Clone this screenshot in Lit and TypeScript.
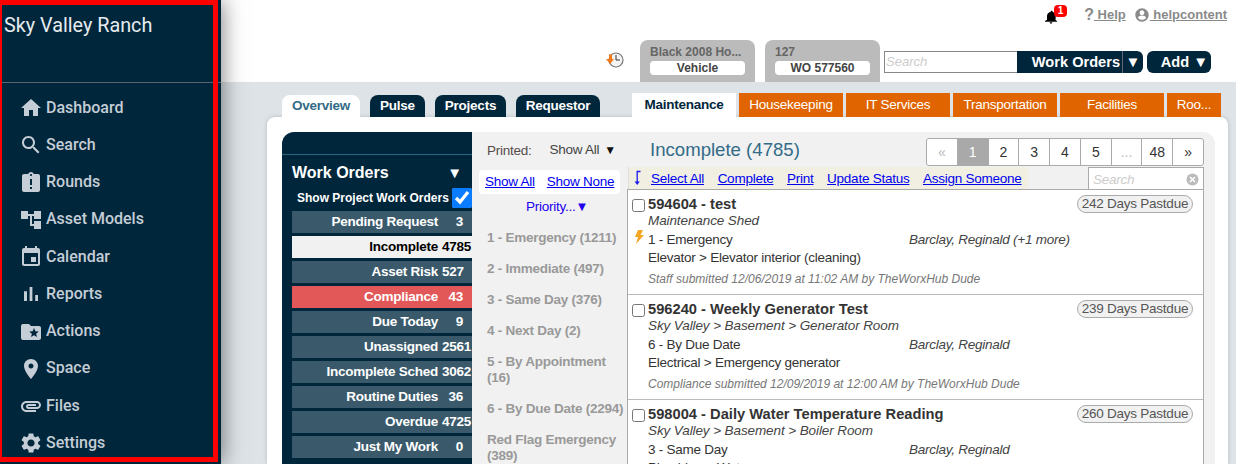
import { LitElement, html, css, svg } from "lit";
import { customElement } from "lit/decorators.js";

const NAV: [string, string][] = [
  ["Dashboard", "M10 20v-6h4v6h5v-8h3L12 3 2 12h3v8z"],
  ["Search", "M15.5 14h-.79l-.28-.27C15.41 12.59 16 11.11 16 9.5 16 5.91 13.09 3 9.5 3S3 5.91 3 9.5 5.91 16 9.5 16c1.61 0 3.09-.59 4.23-1.57l.27.28v.79l5 4.99L20.49 19l-4.99-5zm-6 0C7.01 14 5 11.99 5 9.5S7.01 5 9.5 5 14 7.01 14 9.5 11.99 14 9.5 14z"],
  ["Rounds", "M19 3h-4.18C14.4 1.84 13.3 1 12 1c-1.3 0-2.4.84-2.82 2H5c-1.1 0-2 .9-2 2v14c0 1.1.9 2 2 2h14c1.1 0 2-.9 2-2V5c0-1.1-.9-2-2-2zm-6 15h-2v-2h2v2zm0-4h-2V8h2v6zm-1-9c-.55 0-1-.45-1-1s.45-1 1-1 1 .45 1 1-.45 1-1 1z"],
  ["Asset Models", "M22 11V3h-7v3H9V3H2v8h7V8h2v10h4v3h7v-8h-7v3h-2V8h2v3z"],
  ["Calendar", "M17 12h-5v5h5v-5zM16 1v2H8V1H6v2H5c-1.11 0-1.99.9-1.99 2L3 19c0 1.1.89 2 2 2h14c1.1 0 2-.9 2-2V5c0-1.1-.9-2-2-2h-1V1h-2zm3 18H5V8h14v11z"],
  ["Reports", "M5 9.2h3V19H5zM10.6 5h2.8v14h-2.8zm5.6 8H19v6h-2.8z"],
  ["Actions", "M20 6h-8l-2-2H4c-1.1 0-2 .9-2 2v12c0 1.1.9 2 2 2h16c1.1 0 2-.9 2-2V8c0-1.1-.9-2-2-2zm-2.06 11L15 15.28 12.06 17l.78-3.33-2.59-2.24 3.41-.29L15 8l1.34 3.14 3.41.29-2.59 2.24.78 3.33z"],
  ["Space", "M12 2C8.13 2 5 5.13 5 9c0 5.25 7 13 7 13s7-7.75 7-13c0-3.87-3.13-7-7-7zm0 9.5c-1.38 0-2.5-1.12-2.5-2.5s1.12-2.5 2.5-2.5 2.5 1.12 2.5 2.5-1.12 2.5-2.5 2.5z"],
  ["Files", "M2 12.5C2 9.46 4.46 7 7.5 7H18c2.21 0 4 1.79 4 4s-1.79 4-4 4H9.5C8.12 15 7 13.88 7 12.5S8.12 10 9.5 10H17v2H9.41c-.55 0-.55 1 0 1H18c1.1 0 2-.9 2-2s-.9-2-2-2H7.5C5.57 9 4 10.57 4 12.5S5.57 16 7.5 16H17v2H7.5C4.46 18 2 15.54 2 12.5z"],
  ["Settings", "M19.14 12.94c.04-.3.06-.61.06-.94 0-.32-.02-.64-.07-.94l2.03-1.58c.18-.14.23-.41.12-.61l-1.92-3.32c-.12-.22-.37-.29-.59-.22l-2.39.96c-.5-.38-1.03-.7-1.62-.94l-.36-2.54c-.04-.24-.24-.41-.48-.41h-3.84c-.24 0-.43.17-.47.41l-.36 2.54c-.59.24-1.13.57-1.62.94l-2.39-.96c-.22-.08-.47 0-.59.22L2.74 8.87c-.12.21-.08.47.12.61l2.03 1.58c-.05.3-.09.63-.09.94s.02.64.07.94l-2.03 1.58c-.18.14-.23.41-.12.61l1.92 3.32c.12.22.37.29.59.22l2.39-.96c.5.38 1.03.7 1.62.94l.36 2.54c.05.24.24.41.48.41h3.84c.24 0 .44-.17.47-.41l.36-2.54c.59-.24 1.13-.56 1.62-.94l2.39.96c.22.08.47 0 .59-.22l1.92-3.32c.12-.22.07-.47-.12-.61l-2.01-1.58zM12 15.6c-1.98 0-3.6-1.62-3.6-3.6s1.62-3.6 3.6-3.6 3.6 1.62 3.6 3.6-1.62 3.6-3.6 3.6z"],
];

const QUEUES: [string, string, string][] = [
  ["Pending Request", "3", ""], ["Incomplete", "4785", "on"], ["Asset Risk", "527", ""],
  ["Compliance", "43", "red"], ["Due Today", "9", ""], ["Unassigned", "2561", ""],
  ["Incomplete Sched", "3062", ""], ["Routine Duties", "36", ""], ["Overdue", "4725", ""], ["Just My Work", "0", ""],
];

const PRIORITIES = ["1 - Emergency (1211)", "2 - Immediate (497)", "3 - Same Day (376)", "4 - Next Day (2)",
  "5 - By Appointment (16)", "6 - By Due Date (2294)", "Red Flag Emergency (389)"];

const CARDS = [
  { t: "594604 - test", d: "242 Days Pastdue", s: "Maintenance Shed", p: "1 - Emergency", bolt: true, a: "Barclay, Reginald (+1 more)", c: "Elevator > Elevator interior (cleaning)", f: "Staff submitted 12/06/2019 at 11:02 AM by TheWorxHub Dude" },
  { t: "596240 - Weekly Generator Test", d: "239 Days Pastdue", s: "Sky Valley > Basement > Generator Room", p: "6 - By Due Date", bolt: false, a: "Barclay, Reginald", c: "Electrical > Emergency generator", f: "Compliance submitted 12/09/2019 at 12:00 AM by TheWorxHub Dude" },
  { t: "598004 - Daily Water Temperature Reading", d: "260 Days Pastdue", s: "Sky Valley > Basement > Boiler Room", p: "3 - Same Day", bolt: false, a: "Barclay, Reginald", c: "Plumbing > Water", f: "" },
];

const icon = (d: string) => html`<svg class="nav-ic" viewBox="0 0 24 24" fill="currentColor">${svg`<path d=${d}></path>`}</svg>`;

@customElement("app-root")
export class AppRoot extends LitElement {
  static styles = css`
    :host { display: flex; width: 1236px; height: 464px; overflow: hidden; position: relative; font-family: "Liberation Sans", Arial, sans-serif; font-size: 13.5px; letter-spacing: -.25px; background: #dde3e7; }
    * { box-sizing: border-box; }
    a { color: #0000ee; text-decoration: underline; }

    .side { width: 221px; flex: none; background: #00263b; color: #c5cdd6; font-family: Roboto, sans-serif; letter-spacing: 0; box-shadow: 0 0 22px rgba(0,0,0,.55); position: relative; z-index: 2; }
    .brand { height: 83px; border-bottom: 1px solid #5a6670; padding: 14px 0 0 4px; font-size: 19.8px; line-height: 24px; color: #e6ecf0; }
    .nav { padding-top: 5.6px; }
    .nav-item { height: 37.25px; display: flex; align-items: center; padding-left: 19px; font-size: 16px; font-weight: 500; gap: 3px; }
    .nav-ic { width: 24px; height: 24px; flex: none; margin-top: 2px; }
    .mark { position: absolute; left: 0; top: 0; width: 218px; height: 462px; border: solid #ff0000; border-width: 5px 5px 5px 2px; z-index: 5; pointer-events: none; }

    .main { flex: 1; min-width: 0; }
    .top { height: 82px; background: #fff; display: flex; flex-direction: column; }
    .util { height: 40px; display: flex; align-items: flex-start; justify-content: flex-end; padding: 6px 9px 0 0; color: #8a8a8a; font-weight: 700; font-size: 13px; letter-spacing: 0; }
    .bell { position: relative; width: 14px; height: 18px; margin-right: 25px; margin-top: 2px; color: #000; }
    .bell svg { width: 16px; height: 18px; display: block; margin-left: -2px; }
    .badge { position: absolute; left: 9px; top: -3px; width: 13px; height: 12px; border-radius: 4px; background: #f00; color: #fff; font-size: 10px; line-height: 12px; text-align: center; }
    .util-link { display: flex; align-items: center; height: 17px; color: #8a8a8a; }
    .util-link u { white-space: pre; }
    .help-q { font-size: 16px; line-height: 17px; }
    .user-ic { width: 16px; height: 16px; }
    .util-link + .util-link { margin-left: 8px; }

    .ctx { height: 42px; display: flex; align-items: flex-end; justify-content: flex-end; padding-right: 25px; letter-spacing: 0; }
    .hist { width: 18px; height: 18px; margin: 0 16px 13px 0; flex: none; }
    .rtab { width: 115px; height: 42px; background: #bbb; border-radius: 8px 8px 0 0; padding: 5px 10px 0; margin-right: 10px; color: #666; font-weight: 700; font-size: 12px; line-height: 14px; white-space: nowrap; }
    .rtab b { display: block; margin-top: 2px; height: 14px; background: #fff; border-radius: 4px; color: #444; text-align: center; }
    .rtab:nth-of-type(2) { margin-right: 4px; }
    .qs { display: flex; height: 22px; margin-bottom: 9px; }
    .qs-in { width: 133px; height: 22px; border: 1px solid #888; border-right: 0; background: #fff; color: #ccc; font-style: italic; font-size: 13px; line-height: 20px; padding-left: 1px; }
    .qs-btn { background: #00263b; color: #fff; font-weight: 700; font-size: 14.6px; line-height: 22px; height: 22px; display: flex; }
    .wo { width: 126px; border-radius: 0 6px 6px 0; }
    .wo span:first-child { width: 106px; text-align: right; padding-right: 2px; border-right: 1px solid #667; white-space: nowrap; }
    .wo span:last-child { width: 20px; text-align: center; font-size: 15px; }
    .add { width: 64px; margin-left: 4px; border-radius: 6px; justify-content: flex-end; gap: 4px; padding-right: 3px; }
    .add span:last-child { font-size: 15px; }

    .tabs { height: 35px; padding: 11px 0 0 61px; display: flex; align-items: flex-end; }
    .t1 { width: 78px; height: 22px; margin-right: 10px; background: #00263b; color: #fff; font-weight: 700; text-align: center; line-height: 21px; border-radius: 8px 8px 0 0; }
    .t1.on { background: #fff; color: #336b87; }
    .t1.s { width: 55px; }
    .t1.m { width: 71px; }
    .t1.last { width: 84px; margin-right: 32px; }
    .t2 { width: 104px; height: 24px; margin-right: 3px; background: #e06500; color: #fff; text-align: center; line-height: 24px; }
    .t2.on { background: #fff; color: #00263b; font-weight: 700; }
    .t2.short { width: 54px; }

    .panel { margin-left: 46px; width: 961px; height: 347px; background: #fff; border-radius: 8px 8px 0 0; padding: 15px 13px 0 15px; box-shadow: 0 0 4px rgba(0,0,0,.18); }
    .inner { display: flex; height: 100%; background: #f1f1f1; border-radius: 12px 12px 0 0; overflow: hidden; }

    .queues { width: 190px; flex: none; background: #00263b; color: #fff; padding-left: 10px; font-weight: 700; }
    .q-bar { height: 23px; margin-left: -10px; border-bottom: 1px solid #2c6482; }
    .q-head { height: 34px; margin-bottom: -1px; display: flex; align-items: center; justify-content: space-between; font-size: 16px; padding: 1px 10px 0 0; letter-spacing: 0; }
    .tri { font-size: 15px; }
    .q-show { height: 20px; margin-bottom: 3px; display: flex; align-items: center; justify-content: space-between; font-size: 12px; padding-left: 5px; letter-spacing: 0; }
    .q-show input { width: 20px; height: 20px; margin: 0; accent-color: #0a7cff; }
    .q { height: 22px; margin-bottom: 3px; display: flex; background: #3a5a6c; line-height: 21px; white-space: nowrap; }
    .q.on { background: #f1f1f1; color: #000; }
    .q.red { background: #e25858; }
    .q-n { flex: 1; text-align: right; }
    .q-c { width: 21px; margin: 0 9px 0 4px; text-align: right; }

    .filters { width: 155px; flex: none; padding-top: 11px; }
    .prt { display: flex; height: 16px; padding-left: 15px; color: #554b4b; line-height: 16px; }
    .prt span:nth-child(2) { margin-left: 18px; margin-top: -1px; color: #444; }
    .prt span:nth-child(3) { margin-left: 5px; margin-top: -1px; color: #111; font-size: 12px; }
    .links { margin: 11px 7px 0; height: 24px; background: #fff; border-radius: 4px; display: flex; gap: 12px; padding-left: 6px; line-height: 23px; white-space: nowrap; }
    .prio-h { margin-top: 3px; height: 20px; text-align: center; color: #2200ee; line-height: 20px; padding-left: 15px; white-space: nowrap; }
    .prio-h span { font-size: 13px; }
    .prio { padding: 13px 0 0 15px; width: 155px; color: #999; font-weight: 700; }
    .prio div { line-height: 16px; margin-bottom: 15px; }

    .list { flex: 1; min-width: 0; }
    .l-head { height: 35px; display: flex; justify-content: space-between; margin-right: 11px; padding: 6px 0 0 23px; letter-spacing: 0; }
    .l-title { font-size: 18.6px; color: #336b87; line-height: 24px; }
    .pager { display: flex; height: 28px; border: 1px solid #aaa; border-radius: 3px; background: #fff; width: 278px; }
    .pager span { flex: 1; text-align: center; line-height: 26px; color: #333; font-size: 14px; border-right: 1px solid #aaa; }
    .pager span:last-child { border-right: 0; }
    .pager .dim { color: #bbb; }
    .pager .cur { background: #a9a9a9; color: #fff; }
    .l-tools { height: 23px; margin-right: 11px; display: flex; justify-content: space-between; border-bottom: 1px solid #aaa; }
    .acts { width: 400px; margin-left: 1px; background: #f0efe2; display: flex; align-items: center; padding: 1px 0 0 4px; border-left: 1px solid #ddd; }
    .acts svg { width: 9px; height: 16px; margin: -1px 9px 0 0; flex: none; }
    .acts a { margin-right: 13.6px; white-space: nowrap; }
    .ls { width: 116px; background: #fff; border: 1px solid #aaa; border-bottom: 0; display: flex; align-items: center; justify-content: space-between; padding: 1px 4px 0; color: #ccc; font-style: italic; }
    .ls svg { width: 13px; height: 13px; }
    .cards { margin-right: 11px; background: #fff; border: solid #aaa; border-width: 0 1px; height: 300px; overflow: hidden; color: #333; }
    .card { height: 105px; display: grid; grid-template-columns: 16px 1fr; grid-template-rows: 18px 15px 18px 18px 18px; padding: 5px 10px 0 4px; border-bottom: 1px solid #bbb; }
    .card input { width: 13px; height: 13px; margin: 4px 0 0; }
    .row1 { display: flex; justify-content: space-between; }
    .c-t { font-weight: 700; font-size: 14.7px; line-height: 18px; color: #333; white-space: nowrap; letter-spacing: 0; }
    .due { width: 116px; height: 18px; border: 1px solid #aaa; border-radius: 9px; background: #f1f1f1; color: #555; text-align: center; line-height: 15px; white-space: nowrap; }
    .c-s { grid-column: 2; font-style: italic; color: #444; line-height: 15px; letter-spacing: -.1px; }
    .bolt { width: 12px; height: 14px; margin: 2px 0 0 1px; grid-column: 1; }
    .c-p { grid-column: 2; display: flex; margin-top: 3px; line-height: 18px; }
    .c-p span:first-child { width: 261px; }
    .c-p span:last-child { font-style: italic; color: #444; }
    .c-c { grid-column: 2; margin-top: 3px; line-height: 18px; }
    .c-f { grid-column: 2; margin-top: 6px; font-style: italic; font-size: 12px; color: #777; line-height: 18px; letter-spacing: 0; }
  `;

  render() {
    return html`
      <aside class="side">
        <div class="brand">Sky Valley Ranch</div>
        <nav class="nav">
          ${NAV.map(([n, d]) => html`<div class="nav-item">${icon(d)}<span>${n}</span></div>`)}
        </nav>
      </aside>
      <div class="mark"></div>
      <div class="main">
        <header class="top">
          <div class="util">
            <div class="bell">
              <svg viewBox="0 0 24 24" fill="currentColor"><path d="M12 22c1.1 0 2-.9 2-2h-4c0 1.1.9 2 2 2zm7-6v-5c0-3.07-1.63-5.64-4.5-6.32V4c0-.83-.67-1.5-1.5-1.5s-1.5.67-1.5 1.5v.68C7.64 5.36 6 7.92 6 11v5l-3 2v1h18v-1l-3-2z"></path></svg>
              <span class="badge">1</span>
            </div>
            <span class="util-link"><span class="help-q">?</span><u> Help</u></span>
            <span class="util-link">
              <svg class="user-ic" viewBox="0 0 24 24" fill="currentColor"><path d="M12 2C6.48 2 2 6.48 2 12s4.48 10 10 10 10-4.48 10-10S17.52 2 12 2zm0 3c1.93 0 3.5 1.57 3.5 3.5S13.93 12 12 12s-3.5-1.57-3.5-3.5S10.07 5 12 5zm0 14.2c-2.5 0-4.71-1.28-6-3.22.03-1.99 4-3.08 6-3.08s5.97 1.09 6 3.08c-1.29 1.94-3.5 3.22-6 3.22z"></path></svg>
              <u> helpcontent</u>
            </span>
          </div>
          <div class="ctx">
            <svg class="hist" viewBox="0 0 18 18">
              <circle cx="10" cy="9" r="7" fill="#f4f4f4" stroke="#777" stroke-width="1.2"></circle>
              <path d="M10 4v5h4" fill="none" stroke="#333" stroke-width="1"></path>
              <path d="M0 8h3V3l3 1v4h2l-4 5z" fill="#f07a1a"></path>
            </svg>
            <div class="rtab">Black 2008 Ho...<b>Vehicle</b></div>
            <div class="rtab">127<b>WO 577560</b></div>
            <div class="qs">
              <div class="qs-in">Search</div>
              <div class="qs-btn wo"><span>Work Orders</span><span>▼</span></div>
              <div class="qs-btn add"><span>Add</span><span>▼</span></div>
            </div>
          </div>
        </header>
        <div class="tabs">
          <div class="t1 on">Overview</div>
          <div class="t1 s">Pulse</div>
          <div class="t1 m">Projects</div>
          <div class="t1 last">Requestor</div>
          <div class="t2 on">Maintenance</div>
          <div class="t2">Housekeeping</div>
          <div class="t2">IT Services</div>
          <div class="t2">Transportation</div>
          <div class="t2">Facilities</div>
          <div class="t2 short">Roo...</div>
        </div>
        <section class="panel">
          <div class="inner">
            <div class="queues">
              <div class="q-bar"></div>
              <div class="q-head"><span>Work Orders</span><span class="tri">▼</span></div>
              <div class="q-show"><span>Show Project Work Orders</span><input type="checkbox" checked /></div>
              ${QUEUES.map(([n, c, k]) => html`<div class="q ${k}"><span class="q-n">${n}</span><span class="q-c">${c}</span></div>`)}
            </div>
            <div class="filters">
              <div class="prt"><span>Printed:</span><span>Show All</span><span>▼</span></div>
              <div class="links"><a>Show All</a><a>Show None</a></div>
              <div class="prio-h">Priority...<span>▼</span></div>
              <div class="prio">${PRIORITIES.map((p) => html`<div>${p}</div>`)}</div>
            </div>
            <div class="list">
              <div class="l-head">
                <div class="l-title">Incomplete (4785)</div>
                <div class="pager">
                  <span class="dim">«</span><span class="cur">1</span><span>2</span><span>3</span><span>4</span><span>5</span><span class="dim">...</span><span>48</span><span>»</span>
                </div>
              </div>
              <div class="l-tools">
                <div class="acts">
                  <svg viewBox="0 0 9 16"><path d="M7.5 1.5H4.2v11" fill="none" stroke="#1a1aee" stroke-width="1.3"></path><path d="M1.6 11.5h5.2L4.2 15z" fill="#1a1aee"></path></svg>
                  <a>Select All</a><a>Complete</a><a>Print</a><a>Update Status</a><a>Assign Someone</a>
                </div>
                <div class="ls"><span>Search</span>
                  <svg viewBox="0 0 13 13"><circle cx="6.5" cy="6.5" r="6" fill="#bbb"></circle><path d="M4 4l5 5M9 4l-5 5" stroke="#fff" stroke-width="1.6"></path></svg>
                </div>
              </div>
              <div class="cards">
                ${CARDS.map((c) => html`
                  <article class="card">
                    <input type="checkbox" />
                    <div class="row1"><span class="c-t">${c.t}</span><span class="due">${c.d}</span></div>
                    <div class="c-s">${c.s}</div>
                    ${c.bolt ? html`<svg class="bolt" viewBox="0 0 12 14"><path d="M5 0h5L7.5 5H11L3 14l2-7H2z" fill="#f5a623"></path></svg>` : ""}
                    <div class="c-p"><span>${c.p}</span><span>${c.a}</span></div>
                    <div class="c-c">${c.c}</div>
                    <div class="c-f">${c.f}</div>
                  </article>`)}
              </div>
            </div>
          </div>
        </section>
      </div>
    `;
  }
}
